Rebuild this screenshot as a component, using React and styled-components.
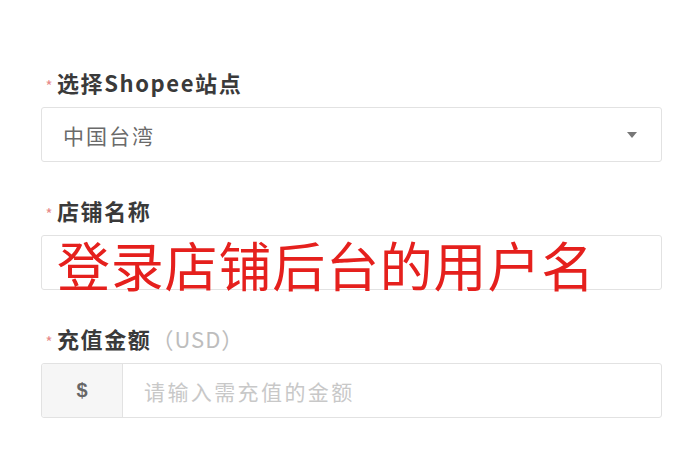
import React from "react";
import styled, { createGlobalStyle } from "styled-components";

const Global = createGlobalStyle`
  html, body { margin: 0; padding: 0; background: #ffffff; }
  body { font-family: "Noto Sans CJK SC", "Noto Sans", "Liberation Sans", sans-serif; }
`;

const Form = styled.div`
  width: 621px;
  padding: 69px 0 0 41px;
  display: flex;
  flex-direction: column;
`;

const Field = styled.div`
  display: flex;
  flex-direction: column;
  margin-bottom: 35px;
`;

const Label = styled.div`
  height: 26px;
  display: flex;
  align-items: center;
  margin-bottom: 12px;
  font-size: 22px;
  font-weight: 700;
  color: #3a3a3a;
  letter-spacing: 1.6px;
`;

const Star = styled.span`
  width: 16px;
  padding-top: 7px;
  color: #e78a8a;
  font-size: 15px;
  font-weight: 400;
  text-align: center;
  letter-spacing: 0;
`;

const Hint = styled.span`
  font-weight: 400;
  color: #bdbdbd;
  letter-spacing: 1px;
`;

const Box = styled.div`
  height: 55px;
  box-sizing: border-box;
  border: 1px solid #e2e2e2;
  border-radius: 3px;
  display: flex;
  align-items: center;
`;

const Value = styled.span`
  flex: 1;
  padding-left: 21px;
  font-size: 21px;
  color: #6a6a6a;
  letter-spacing: 2px;
`;

const Caret = styled.span`
  width: 0;
  height: 0;
  margin-right: 24px;
  border-left: 5px solid transparent;
  border-right: 5px solid transparent;
  border-top: 6px solid #777;
`;

const BigText = styled.span`
  padding-left: 15px;
  font-size: 53px;
  font-weight: 400;
  line-height: 1;
  color: #e5201d;
  letter-spacing: 0.8px;
  margin-top: 3px;
  white-space: nowrap;
`;

const Prefix = styled.div`
  width: 80px;
  height: 100%;
  background: #f6f6f6;
  border-right: 1px solid #e2e2e2;
  border-radius: 3px 0 0 3px;
  display: flex;
  align-items: center;
  justify-content: center;
  font-family: "Liberation Sans", sans-serif;
  font-weight: 700;
  font-size: 20px;
  color: #666;
`;

const Placeholder = styled.span`
  padding-left: 21px;
  font-size: 21px;
  color: #c8c8c8;
  letter-spacing: 2.4px;
`;

export default function App() {
  return (
    <>
      <Global />
      <Form>
        <Field>
          <Label><Star>*</Star>选择Shopee站点</Label>
          <Box>
            <Value>中国台湾</Value>
            <Caret />
          </Box>
        </Field>
        <Field>
          <Label><Star>*</Star>店铺名称</Label>
          <Box>
            <BigText>登录店铺后台的用户名</BigText>
          </Box>
        </Field>
        <Field>
          <Label><Star>*</Star>充值金额<Hint>（USD）</Hint></Label>
          <Box>
            <Prefix>$</Prefix>
            <Placeholder>请输入需充值的金额</Placeholder>
          </Box>
        </Field>
      </Form>
    </>
  );
}
